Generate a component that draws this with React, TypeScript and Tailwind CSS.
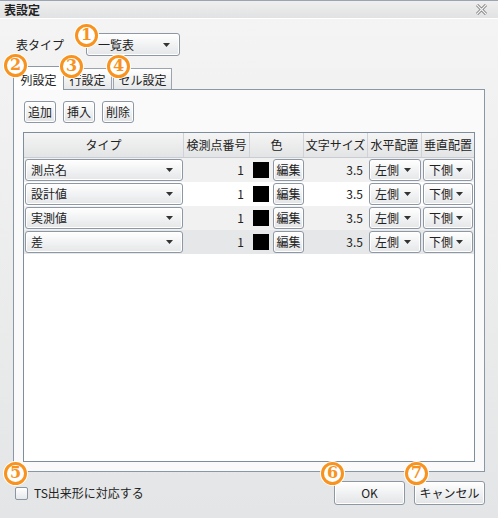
import React from 'react';

const rows = [
  { type: '測点名', bg: 'bg-[#f1f1f1]' },
  { type: '設計値', bg: 'bg-white' },
  { type: '実測値', bg: 'bg-[#f1f1f1]' },
  { type: '差', bg: 'bg-[#e6e7e8]' },
];

const markers = [
  { n: '1', cls: 'left-[75px] top-[24px]' },
  { n: '2', cls: 'left-[4px] top-[54px]' },
  { n: '3', cls: 'left-[60px] top-[55px]' },
  { n: '4', cls: 'left-[107px] top-[55px]' },
  { n: '5', cls: 'left-[4px] top-[462px]' },
  { n: '6', cls: 'left-[321px] top-[462px]' },
  { n: '7', cls: 'left-[405px] top-[462px]' },
];

function Arrow() {
  return (
    <svg width="7" height="4" viewBox="0 0 7 4" className="shrink-0">
      <path d="M0 0 L7 0 L3.5 4 Z" fill="#333" />
    </svg>
  );
}

function Combo({ label, className }: { label: string; className: string }) {
  return (
    <div
      className={`flex items-center justify-between rounded-[3px] border border-[#8d98a4] bg-gradient-to-b from-white to-[#e4e6e8] shadow-[inset_0_0_0_1px_#ffffff] ${className}`}
    >
      <span>{label}</span>
      <Arrow />
    </div>
  );
}

function Btn({ label, className }: { label: string; className: string }) {
  return (
    <div
      className={`flex items-center justify-center rounded-[3px] border border-[#8d98a4] bg-gradient-to-b from-white to-[#e2e4e6] shadow-[inset_0_0_0_1px_#ffffff] ${className}`}
    >
      {label}
    </div>
  );
}

function Marker({ n, cls }: { n: string; cls: string }) {
  return (
    <div
      className={`absolute z-20 ${cls} flex h-[23px] w-[23px] items-center justify-center rounded-full border-[3px] border-[#f7931e] bg-white text-[16px] font-bold leading-none text-[#f7931e] shadow-[0_0_0_1px_#ffffff] [font-family:'DejaVu_Serif',serif]`}
    >
      <span className="-mt-[1px]">{n}</span>
    </div>
  );
}

export default function App() {
  return (
    <div className="relative flex h-[518px] w-[498px] flex-col overflow-hidden text-[12px] leading-none text-[#222] [font-family:'Noto_Sans_CJK_JP','Liberation_Sans',sans-serif]">
      {/* title bar */}
      <div className="flex h-[19px] items-center justify-between border-t border-b border-t-[#9ba5b2] border-b-white bg-gradient-to-b from-[#efefef] to-[#e1e2e3] pl-[4px] pr-[11px]">
        <span className="font-bold">表設定</span>
        <svg width="11" height="11" viewBox="0 0 11 11">
          <path d="M1 1 L10 10 M10 1 L1 10" stroke="#7d7d7d" strokeWidth="3" />
          <path d="M1 1 L10 10 M10 1 L1 10" stroke="#f4f4f4" strokeWidth="1.2" />
        </svg>
      </div>

      {/* body */}
      <div className="flex flex-1 flex-col bg-gradient-to-b from-[#f4f4f4] to-[#e4e5e6] px-[13px] pt-[14px] pb-[14px]">
        <div className="flex h-[23px] items-center pl-[3px]">
          <span className="w-[70px]">表タイプ</span>
          <Combo label="一覧表" className="h-[23px] w-[94px] pl-[11px] pr-[9px]" />
        </div>

        {/* tabs */}
        <div className="mt-[10px] flex h-[23px] items-end">
          <div className="relative z-10 -mb-px flex h-[24px] w-[51px] items-center justify-center border border-b-0 border-[#8d99a6] bg-white pt-[2px]">
            列設定
          </div>
          <div className="flex h-[21px] w-[48px] items-center justify-center border border-b-0 border-l-0 border-[#9aa5b0] bg-gradient-to-b from-white to-[#e6e7e8] pt-[2px]">
            行設定
          </div>
          <div className="ml-[1px] flex h-[21px] w-[59px] items-center justify-center border border-b-0 border-[#9aa5b0] bg-gradient-to-b from-white to-[#e6e7e8] pt-[2px]">
            セル設定
          </div>
        </div>

        {/* panel */}
        <div className="flex h-[383px] flex-col border border-[#8b97a4] bg-[#fafafa] px-[9px] pt-[11px] pb-[9px]">
          <div className="flex gap-[7px] pl-[1px]">
            <Btn label="追加" className="h-[22px] w-[32px]" />
            <Btn label="挿入" className="h-[22px] w-[32px]" />
            <Btn label="削除" className="h-[22px] w-[32px]" />
          </div>

          <div className="mt-[9px] flex flex-1 flex-col border border-[#7f8e9c] bg-white">
            <div className="grid h-[25px] grid-cols-[160px_66px_54px_64px_54px_1fr] border-b border-[#c9cdd1] bg-gradient-to-b from-[#f5f5f5] to-[#e3e4e5]">
              {['タイプ', '検測点番号', '色', '文字サイズ', '水平配置', '垂直配置'].map((h, i) => (
                <div
                  key={h}
                  className={`flex items-center justify-center ${i < 5 ? 'border-r border-[#cfd3d7]' : ''}`}
                >
                  {h}
                </div>
              ))}
            </div>
            {rows.map((r) => (
              <div
                key={r.type}
                className={`grid h-[24px] grid-cols-[160px_66px_54px_64px_54px_1fr] items-center ${r.bg}`}
              >
                <div className="px-[1px]">
                  <Combo label={r.type} className="h-[22px] pl-[5px] pr-[9px]" />
                </div>
                <div className="pr-[6px] text-right">1</div>
                <div className="flex items-center gap-[4px] pl-[3px]">
                  <div className="h-[16px] w-[16px] bg-black" />
                  <Btn label="編集" className="h-[22px] w-[31px]" />
                </div>
                <div className="pr-[5px] text-right">3.5</div>
                <div className="px-[1px]">
                  <Combo label="左側" className="h-[22px] pl-[5px] pr-[9px]" />
                </div>
                <div className="pl-[1px] pr-[1px]">
                  <Combo label="下側" className="h-[22px] pl-[5px] pr-[9px]" />
                </div>
              </div>
            ))}
          </div>
        </div>

        {/* footer */}
        <div className="mt-[9px] flex h-[23px] items-center">
          <div className="flex flex-1 items-center gap-[6px] pl-[2px] pt-[1px]">
            <div className="h-[13px] w-[13px] rounded-[2px] border border-[#8a96a2] bg-gradient-to-b from-white to-[#e6e8ea]" />
            <span>TS出来形に対応する</span>
          </div>
          <Btn label="OK" className="h-[24px] w-[71px]" />
          <Btn label="キャンセル" className="ml-[9px] h-[24px] w-[71px]" />
        </div>
      </div>

      {markers.map((m) => (
        <Marker key={m.n} n={m.n} cls={m.cls} />
      ))}
    </div>
  );
}
